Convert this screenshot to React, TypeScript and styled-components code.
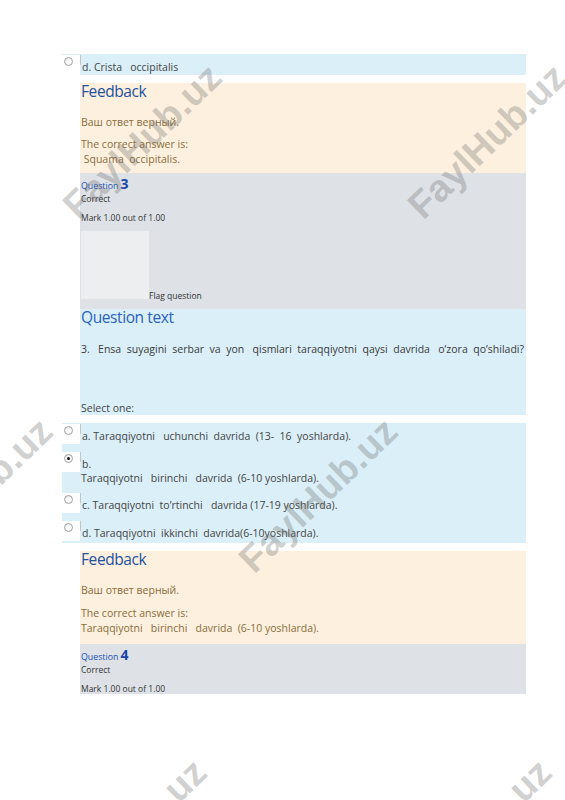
import React from "react";
import styled, { createGlobalStyle, css } from "styled-components";

const GlobalStyle = createGlobalStyle`
  html, body { margin: 0; padding: 0; background: #ffffff; }
  body { font-family: "Open Sans", "Noto Sans", sans-serif; }
  * { box-sizing: border-box; }
`;

const Page = styled.div`
  position: relative;
  width: 565px;
  height: 800px;
  overflow: hidden;
  padding: 54px 0 0 62px;
`;

const Column = styled.div`
  width: 464px;
  display: flex;
  flex-direction: column;
`;

const AnswerList = styled.div<{ $mt?: number }>`
  background: #dbeff8;
  margin-top: ${(p) => p.$mt ?? 0}px;
  display: flex;
  flex-direction: column;
`;

const AnswerRow = styled.div<{ $mb: number }>`
  display: flex;
  align-items: flex-start;
  padding-top: 1px;
  margin-bottom: ${(p) => p.$mb}px;
`;

const RadioCell = styled.div`
  position: relative;
  flex: none;
  width: 20px;
  height: 20px;
  margin-left: -2px;
  background: #ffffff;
  &::after {
    content: "";
    position: absolute;
    right: -1px;
    top: 0;
    width: 1px;
    height: 10px;
    background: #c4c4c4;
  }
`;

const Radio = styled.span<{ $checked?: boolean }>`
  position: absolute;
  left: 4px;
  top: 2px;
  width: 9px;
  height: 9px;
  border-radius: 50%;
  border: 1px solid #a4a4a4;
  background: radial-gradient(circle at 60% 65%, #ffffff 0%, #f4f4f4 55%, #d4d4d4 100%);
  ${(p) =>
    p.$checked &&
    css`
      &::after {
        content: "";
        position: absolute;
        left: 2px;
        top: 2px;
        width: 3px;
        height: 3px;
        border-radius: 50%;
        background: #111;
      }
    `}
`;

const Label = styled.div`
  padding: 5px 0 0 2px;
  font-size: 10.5px;
  line-height: 14px;
  color: #444444;
  white-space: pre;
`;

const LabelLine = styled.div<{ $indent?: number }>`
  margin-left: ${(p) => p.$indent ?? 0}px;
`;

const Feedback = styled.div<{ $pb: number }>`
  margin: 8px 0 0 18px;
  background: #fdf0df;
  padding: 0 0 ${(p) => p.$pb}px 1px;
`;

const SectionTitle = styled.div<{ $light?: boolean }>`
  font-size: 15.5px;
  line-height: 17px;
  color: ${(p) => (p.$light ? "#2a62c0" : "#23509f")};
  letter-spacing: -0.4px;
`;

const FeedbackText = styled.div<{ $mt: number }>`
  margin-top: ${(p) => p.$mt}px;
  font-size: 10.5px;
  line-height: 15px;
  color: #8a6d3b;
  white-space: pre;
`;

const Info = styled.div<{ $pb: number }>`
  margin-left: 18px;
  background: #dee2e6;
  padding: 4px 0 ${(p) => p.$pb}px 1px;
`;

const QNo = styled.div`
  line-height: 14px;
  color: #1c4fb3;
  font-size: 8.8px;
`;

const QNum = styled.span`
  font-size: 14px;
  font-weight: 700;
  color: #1b45a6;
  margin-left: 2px;
`;

const SmallText = styled.div<{ $mt?: number }>`
  margin-top: ${(p) => p.$mt ?? 0}px;
  font-size: 8.5px;
  line-height: 11px;
  color: #333333;
`;

const FlagRow = styled.div`
  margin-top: 8px;
  font-size: 8.5px;
  line-height: 11px;
  color: #333333;
`;

const FlagBox = styled.span`
  display: inline-block;
  width: 68px;
  height: 68px;
  background: #eceef0;
  vertical-align: baseline;
`;

const QText = styled.div`
  margin-left: 18px;
  background: #dbeff8;
  padding: 0 2px 0 1px;
`;

const QuestionPara = styled.div`
  margin-top: 16px;
  font-size: 10.5px;
  line-height: 15px;
  color: #3a3a3a;
  text-align: justify;
  text-align-last: justify;
  white-space: pre-wrap;
`;

const SelectOne = styled.div`
  margin-top: 44px;
  font-size: 10.5px;
  line-height: 14px;
  color: #444444;
`;

const Watermark = styled.div`
  position: absolute;
  transform: translate(-50%, -50%) rotate(-44deg);
  font-family: "Liberation Sans", Arial, sans-serif;
  font-weight: 700;
  font-size: 38px;
  line-height: 1;
  color: rgba(110, 110, 110, 0.33);
  white-space: nowrap;
  pointer-events: none;
`;

const marks = [
  { x: 142, y: 141 },
  { x: 487, y: 141 },
  { x: -27, y: 495 },
  { x: 318, y: 495 },
  { x: 127, y: 836 },
  { x: 472, y: 836 },
];

type Opt = { text: string; checked?: boolean; second?: string };

const options: Opt[] = [
  { text: "a. Taraqqiyotni   uchunchi  davrida  (13-  16  yoshlarda)." },
  { text: "b.", checked: true, second: "Taraqqiyotni   birinchi   davrida  (6-10 yoshlarda)." },
  { text: "c. Taraqqiyotni  to’rtinchi   davrida (17-19 yoshlarda)." },
  { text: "d. Taraqqiyotni  ikkinchi  davrida(6-10yoshlarda)." },
];

export default function App() {
  return (
    <>
      <GlobalStyle />
      <Page>
        <Column>
          <AnswerList>
            <AnswerRow $mb={0}>
              <RadioCell>
                <Radio />
              </RadioCell>
              <Label>d. Crista   occipitalis</Label>
            </AnswerRow>
          </AnswerList>

          <Feedback $pb={6}>
            <SectionTitle>Feedback</SectionTitle>
            <FeedbackText $mt={15}>Ваш ответ верный.</FeedbackText>
            <FeedbackText $mt={7}>The correct answer is:</FeedbackText>
            <FeedbackText $mt={0}> Squama  occipitalis.</FeedbackText>
          </Feedback>

          <Info $pb={8}>
            <QNo>
              Question<QNum>3</QNum>
            </QNo>
            <SmallText>Correct</SmallText>
            <SmallText $mt={8}>Mark 1.00 out of 1.00</SmallText>
            <FlagRow>
              <FlagBox />
              Flag question
            </FlagRow>
          </Info>

          <QText>
            <SectionTitle $light>Question text</SectionTitle>
            <QuestionPara>
              {"3.   Ensa  suyagini  serbar  va  yon   qismlari  taraqqiyotni  qaysi  davrida   o’zora  qo’shiladi?"}
            </QuestionPara>
            <SelectOne>Select one:</SelectOne>
          </QText>

          <AnswerList $mt={8}>
            {options.map((o, i) => (
              <AnswerRow key={i} $mb={i === options.length - 1 ? 2 : 7}>
                <RadioCell>
                  <Radio $checked={o.checked} />
                </RadioCell>
                <Label>
                  <LabelLine>{o.text}</LabelLine>
                  {o.second && <LabelLine $indent={-1}>{o.second}</LabelLine>}
                </Label>
              </AnswerRow>
            ))}
          </AnswerList>

          <Feedback $pb={8}>
            <SectionTitle>Feedback</SectionTitle>
            <FeedbackText $mt={15}>Ваш ответ верный.</FeedbackText>
            <FeedbackText $mt={8}>The correct answer is:</FeedbackText>
            <FeedbackText $mt={0}>Taraqqiyotni   birinchi   davrida  (6-10 yoshlarda).</FeedbackText>
          </Feedback>

          <Info $pb={0}>
            <QNo>
              Question<QNum>4</QNum>
            </QNo>
            <SmallText>Correct</SmallText>
            <SmallText $mt={8}>Mark 1.00 out of 1.00</SmallText>
          </Info>
        </Column>

        {marks.map((m, i) => (
          <Watermark key={i} style={{ left: m.x, top: m.y }}>
            FaylHub.uz
          </Watermark>
        ))}
      </Page>
    </>
  );
}
